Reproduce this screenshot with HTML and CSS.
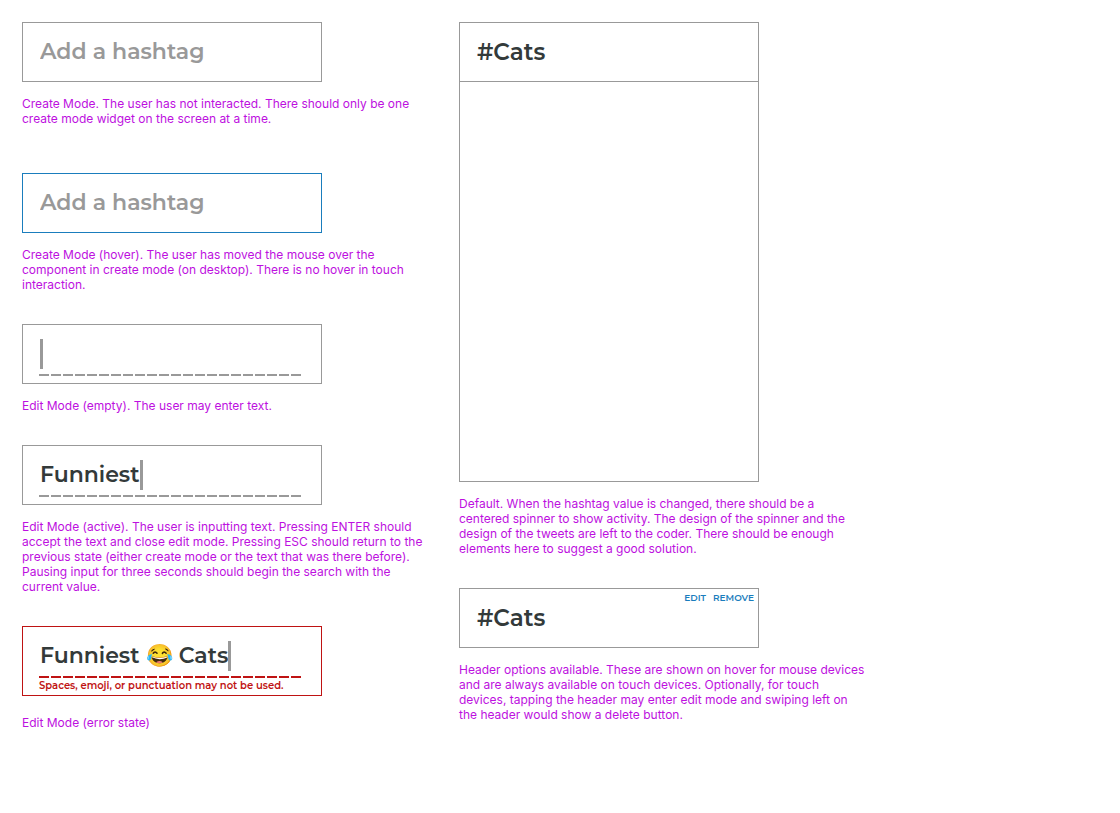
FILE: index.html
```html
<!DOCTYPE html>
<html lang="en">
<head>
<meta charset="utf-8">
<meta name="viewport" content="width=device-width, initial-scale=1">
<title>Hashtag widget states</title>
<link rel="stylesheet" href="styles.css">
</head>
<body>
<main class="board">
  <section class="column">
    <article class="state">
      <div class="widget">
        <input class="field" type="text" placeholder="Add a hashtag" aria-label="Hashtag" aria-describedby="note-create">
      </div>
      <p class="note note-tall" id="note-create">Create Mode. The user has not interacted. There should only be one<br>create mode widget on the screen at a time.</p>
    </article>
    <article class="state">
      <div class="widget is-hover">
        <input class="field" type="text" placeholder="Add a hashtag" aria-label="Hashtag" aria-describedby="note-hover">
      </div>
      <p class="note" id="note-hover">Create Mode (hover). The user has moved the mouse over the<br>component in create mode (on desktop). There is no hover in touch<br>interaction.</p>
    </article>
    <article class="state">
      <div class="widget is-editing">
        <div class="entry">
          <input class="field field-fit field-empty" type="text" aria-label="Hashtag" aria-describedby="note-empty">
          <span class="caret"></span>
        </div>
        <div class="dashes"></div>
      </div>
      <p class="note" id="note-empty">Edit Mode (empty). The user may enter text.</p>
    </article>
    <article class="state">
      <div class="widget is-editing">
        <div class="entry">
          <input class="field field-fit" type="text" value="Funniest" aria-label="Hashtag" aria-describedby="note-active">
          <span class="caret"></span>
        </div>
        <div class="dashes"></div>
      </div>
      <p class="note" id="note-active">Edit Mode (active). The user is inputting text. Pressing ENTER should<br>accept the text and close edit mode. Pressing ESC should return to the<br>previous state (either create mode or the text that was there before).<br>Pausing input for three seconds should begin the search with the<br>current value.</p>
    </article>
    <article class="state">
      <div class="widget is-editing is-error">
        <div class="entry">
          <input class="field field-fit" type="text" value="Funniest 😂 Cats" aria-label="Hashtag" aria-invalid="true" aria-describedby="error-text">
          <span class="caret"></span>
        </div>
        <div class="dashes"></div>
        <p class="error" id="error-text">Spaces, emoji, or punctuation may not be used.</p>
      </div>
      <p class="note note-low">Edit Mode (error state)</p>
    </article>
  </section>

  <section class="column">
    <article class="state">
      <div class="widget">
        <h2 class="title">#Cats</h2>
      </div>
      <div class="feed"></div>
      <p class="note">Default. When the hashtag value is changed, there should be a<br>centered spinner to show activity. The design of the spinner and the<br>design of the tweets are left to the coder. There should be enough<br>elements here to suggest a good solution.</p>
    </article>
    <article class="state">
      <div class="widget">
        <h2 class="title">#Cats</h2>
        <div class="actions">
          <button class="action" type="button">EDIT</button>
          <button class="action" type="button">REMOVE</button>
        </div>
      </div>
      <p class="note">Header options available. These are shown on hover for mouse devices<br>and are always available on touch devices. Optionally, for touch<br>devices, tapping the header may enter edit mode and swiping left on<br>the header would show a delete button.</p>
    </article>
  </section>
</main>
</body>
</html>
```
FILE: styles.css
```css
:root {
  --line: #999;
  --ink: #333a3a;
  --blue: #1a7dbd;
  --red: #bf1313;
  --note: #bd10e0;
  --display: Montserrat, Inter, "Open Sans", sans-serif;
}

* { box-sizing: border-box; }

body {
  margin: 0;
  background: #fff;
  font-family: Inter, "Liberation Sans", Arial, sans-serif;
}

.board {
  display: flex;
  flex-wrap: wrap;
  gap: 29px;
  padding: 22px;
}

.column {
  display: flex;
  flex-direction: column;
  flex: 0 1 408px;
  gap: 32px;
}

.widget {
  position: relative;
  display: flex;
  flex-direction: column;
  justify-content: center;
  max-width: 300px;
  min-height: 60px;
  padding: 0 17px;
  border: 1px solid var(--line);
}

.is-hover { border-color: var(--blue); }

.field,
.title {
  margin: 0;
  padding: 0;
  border: 0;
  outline: 0;
  background: none;
  color: var(--ink);
  font: 600 22px/30px var(--display);
}

.title { font-size: 23px; }

.field { width: 100%; }
.field::placeholder { color: var(--line); opacity: 1; }

.is-editing {
  justify-content: flex-start;
  padding: 14px 20px 0 16px;
}

.entry {
  display: flex;
  height: 30px;
  padding-left: 1px;
}

.field-fit {
  width: auto;
  min-width: 0;
  field-sizing: content;
}

.field-empty { width: 0; }

.caret {
  flex: none;
  width: 3px;
  background: var(--line);
}

.dashes {
  height: 2px;
  margin-top: 5px;
  background: repeating-linear-gradient(90deg, var(--line) 0 10px, transparent 10px 12px);
}

.is-error {
  min-height: 70px;
  border-color: var(--red);
}

.is-error .dashes {
  background: repeating-linear-gradient(90deg, var(--red) 0 10px, transparent 10px 12px);
}

.error {
  margin: 0;
  color: var(--red);
  font: 600 10px/16px var(--display);
  white-space: nowrap;
}

.feed {
  max-width: 300px;
  height: 400px;
  border: 1px solid var(--line);
  border-top: 0;
}

.actions {
  position: absolute;
  top: 2px;
  right: 4px;
  display: flex;
  gap: 7px;
}

.action {
  padding: 0;
  border: 0;
  background: none;
  color: var(--blue);
  font: 600 9px/14px var(--display);
  cursor: pointer;
}

.note {
  margin: 14px 0 0;
  color: var(--note);
  font-size: 12px;
  line-height: 15px;
}

.note-tall { min-height: 45px; }
.note-low { margin-top: 19px; }
```
